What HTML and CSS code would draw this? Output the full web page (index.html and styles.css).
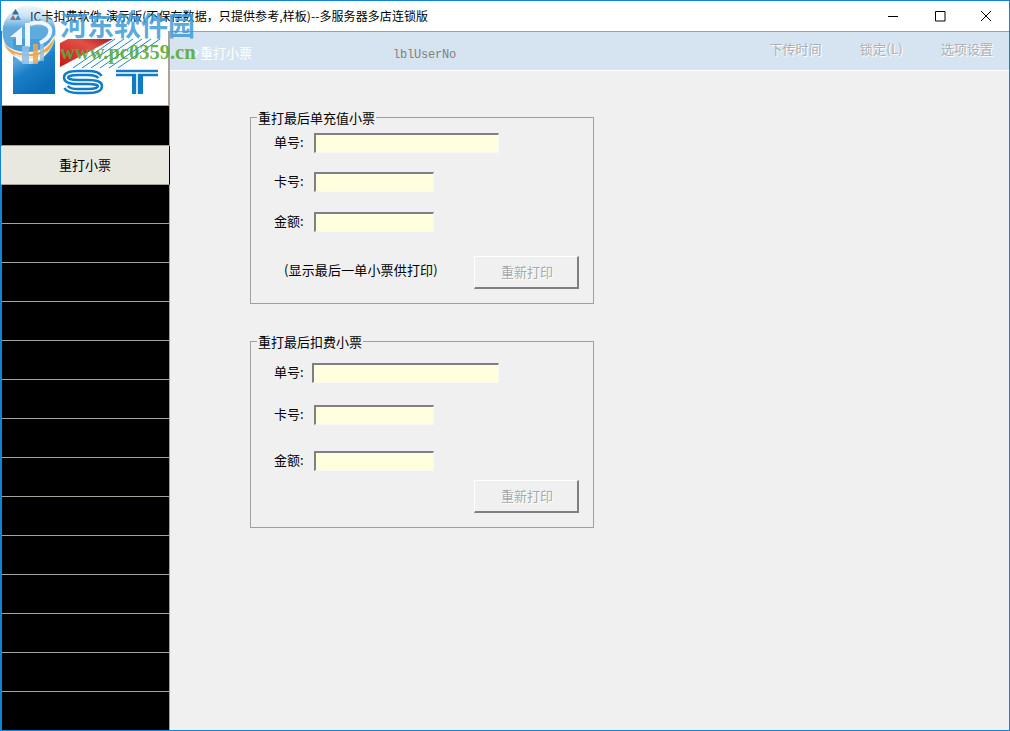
FILE: index.html
```html
<!DOCTYPE html>
<html lang="zh">
<head>
<meta charset="utf-8">
<title>IC卡扣费软件</title>
<link rel="stylesheet" href="styles.css">
</head>
<body>
<div class="window">
  <header class="titlebar">
    <svg class="app-icon" width="16" height="16" viewBox="0 0 16 16"><path d="M5.500 1L9 6.500H2z" fill="#2f5f7f"/><path d="M3 7l3 5H0z" fill="#c84848"/><path d="M8 7l3 5H5z" fill="#2f7f9f"/></svg>
    <span class="title">IC卡扣费软件-演示版(不保存数据，只提供参考,样板)--多服务器多店连锁版</span>
    <div class="controls">
      <span class="ctl"><svg width="12" height="12" viewBox="0 0 12 12"><path d="M0 6.500h10" stroke="#000" fill="none"/></svg></span>
      <span class="ctl"><svg width="12" height="12" viewBox="0 0 12 12"><path d="M1.500 1.500h9.500v9.500h-9.500z" stroke="#000" fill="none"/></svg></span>
      <span class="ctl"><svg width="12" height="12" viewBox="0 0 12 12"><path d="M1 1l10 10M11 1L1 11" stroke="#000" fill="none"/></svg></span>
    </div>
  </header>
  <div class="body">
    <aside class="sidebar">
      <div class="logo">
        <svg width="166" height="74" viewBox="0 0 166 74">
          <defs>
            <linearGradient id="blk" x1="0" y1="0" x2="0.5" y2="1"><stop offset="0" stop-color="#1678c0"/><stop offset="0.35" stop-color="#5aa8dc"/><stop offset="0.6" stop-color="#1a80c8"/><stop offset="1" stop-color="#0a6cb4"/></linearGradient>
            <linearGradient id="red" x1="0" y1="1" x2="1" y2="0"><stop offset="0" stop-color="#d01414"/><stop offset="0.65" stop-color="#e05048"/><stop offset="1" stop-color="#b01818"/></linearGradient>
          </defs>
          <rect x="11" y="8" width="42" height="55" fill="url(#blk)"/>
          <path d="M58 12l8-4h45L58 36z" fill="url(#red)"/>
          <g stroke="#1f86c6" stroke-width="1" fill="none">
            <path d="M71 37L113 8M80 37L122 8M89 37L131 8M98 37L140 8M107 37L149 8M116 37L158 8"/>
          </g>
          <g fill="none" stroke-width="6.500" stroke="#0f7cc4">
            <path d="M98 46C96 43 92 42 86 42H76C68 42 64 44 64 46.500C64 49.500 68 51 76 51H86C94 51 98 52.500 98 55C98 58 94 60 86 60H76C70 60 66 59 64 56"/>
            <path d="M114 42H156"/>
          </g>
          <rect x="130" y="42" width="11" height="21" fill="#0f7cc4"/>
          <g fill="none" stroke-width="1.600" stroke="#fff">
            <path d="M98 46C96 43 92 42 86 42H76C68 42 64 44 64 46.500C64 49.500 68 51 76 51H86C94 51 98 52.500 98 55C98 58 94 60 86 60H76C70 60 66 59 64 56"/>
            <path d="M114 42H156M135 42V63"/>
          </g>
        </svg>
      </div>
      <nav class="menu">
        <div class="item first"></div>
        <div class="item active">重打小票</div>
        <div class="item"></div>
        <div class="item"></div>
        <div class="item"></div>
        <div class="item"></div>
        <div class="item"></div>
        <div class="item"></div>
        <div class="item"></div>
        <div class="item"></div>
        <div class="item"></div>
        <div class="item"></div>
        <div class="item"></div>
        <div class="item"></div>
        <div class="item"></div>
        <div class="item last"></div>
      </nav>
    </aside>
    <main class="main">
      <div class="band">
        <span class="crumb"><span class="caret"></span>重打小票</span>
        <span class="user">lblUserNo</span>
        <div class="links">
          <span class="link">下传时间</span>
          <span class="link link-lock">锁定(L)</span>
          <span class="link">选项设置</span>
        </div>
      </div>
      <div class="content">
        <section class="group">
          <h2 class="legend">重打最后单充值小票</h2>
          <div class="row row-a1"><label class="lab">单号:</label><span class="input wide"></span></div>
          <div class="row row-a2"><label class="lab">卡号:</label><span class="input"></span></div>
          <div class="row row-a3"><label class="lab">金额:</label><span class="input"></span></div>
          <div class="actions action-a">
            <span class="note">(显示最后一单小票供打印)</span>
            <button class="btn" disabled>重新打印</button>
          </div>
        </section>
        <section class="group">
          <h2 class="legend">重打最后扣费小票</h2>
          <div class="row row-b1"><label class="lab lab-tight">单号:</label><span class="input wider"></span></div>
          <div class="row row-b2"><label class="lab">卡号:</label><span class="input"></span></div>
          <div class="row row-b3"><label class="lab">金额:</label><span class="input"></span></div>
          <div class="actions action-b">
            <button class="btn" disabled>重新打印</button>
          </div>
        </section>
      </div>
    </main>
  </div>
  <div class="mark" aria-hidden="true">
    <svg class="mark-logo" width="58" height="62" viewBox="0 0 58 62">
      <defs>
        <linearGradient id="disc" x1="0" y1="0" x2="0" y2="1">
          <stop offset="0" stop-color="#4a9fd9" stop-opacity=".08"/>
          <stop offset="0.2" stop-color="#4a9fd9" stop-opacity=".3"/>
          <stop offset="0.42" stop-color="#4a9fd9" stop-opacity=".88"/>
          <stop offset="1" stop-color="#4a9fd9" stop-opacity=".88"/>
        </linearGradient>
      </defs>
      <circle cx="27" cy="27" r="26.500" fill="url(#disc)"/>
      <path d="M8 32L20 22V40H14V32z" fill="#fff" opacity=".9"/>
      <path d="M23 18h5v24h-5z" fill="#fff" opacity=".9"/>
      <path d="M28 19C40 15 50 20 48 28C47 33 42 36 38 38" fill="none" stroke="#fff" stroke-width="4" opacity=".9"/>
      <path d="M1 38C6 50 16 56 28 56C40 56 50 48 54 30C52 30 50 34 48 37C42 44 34 47 26 47C16 47 8 44 1 38z" fill="#f0f0f0"/>
      <path d="M2 39C8 46 18 49 28 49C38 49 47 43 53 32C50 46 40 54 28 54C16 54 6 48 2 39z" fill="#e9a750"/>
      <path d="M12 48C16 50 22 51 28 51C34 51 40 49 45 46C42 54 36 59 28 59C20 59 15 55 12 48z" fill="#fff" opacity=".7"/>
      <path d="M20 41h7v18h-7z" fill="#8fc0e4" opacity=".9"/>
      <path d="M31 39h5v20h-5z" fill="#e9a750" opacity=".85"/>
      <path d="M38 39h4v17h-4z" fill="#8fc0e4" opacity=".8"/>
    </svg>
    <span class="mark-cn">河东软件园</span>
    <span class="mark-url">www.pc0359.cn</span>
  </div>
</div>
</body>
</html>
```

FILE: styles.css
```css
* { box-sizing: border-box; }
html, body { margin: 0; padding: 0; }
body {
  width: 1010px;
  height: 731px;
  overflow: hidden;
  font-family: "Noto Sans CJK SC", "Liberation Sans", sans-serif;
  font-size: 13px;
  color: #000;
}
.window {
  position: relative;
  width: 1010px;
  height: 731px;
  display: flex;
  flex-direction: column;
  border: 1px solid #0f84d8;
  background: #f0f0f0;
}
.titlebar {
  height: 30px;
  background: #fff;
  display: flex;
  align-items: center;
  flex: none;
  padding-left: 9px;
}
.app-icon { flex: none; margin-top: -1px; }
.title { margin-left: 4px; font-size: 12px; letter-spacing: 0.08px; white-space: nowrap; margin-top: -2px; }
.controls { margin-left: auto; display: flex; }
.ctl {
  width: 46px;
  height: 30px;
  display: flex;
  align-items: center;
  justify-content: center;
}
.body { flex: 1; display: flex; min-height: 0; }
.sidebar {
  width: 169px;
  flex: none;
  display: flex;
  flex-direction: column;
  border-left: 1px solid #0f84d8;
}
.logo {
  height: 75px;
  flex: none;
  background: #fff;
  border-bottom: 1px solid #a8a298;
  border-right: 2px solid #a8a298;
  overflow: hidden;
}
.logo svg { display: block; }
.menu { flex: 1; display: flex; flex-direction: column; }
.item {
  height: 39px;
  flex: none;
  background: #000;
  border-bottom: 1px solid #a8a298;
  border-right: 1px solid #a8a298;
}
.item.first { height: 40px; }
.item.last { flex: 1; border-bottom: 0; }
.item.active {
  background: #e8e8e0;
  border-right: 1px solid #000;
  margin-left: -1px;
  display: flex;
  align-items: center;
  justify-content: center;
  padding-bottom: 2px;
  font-size: 13px;
}
.main { flex: 1; display: flex; flex-direction: column; min-width: 0; }
.band {
  height: 40px;
  flex: none;
  display: flex;
  align-items: center;
  background: #d6e4f1;
  border-top: 1px solid #a0a0a0;
  border-bottom: 1px solid #fff;
  padding: 0 16px 0 25px;
}
.crumb { color: #fff; margin-top: 2px; display: flex; align-items: center; }
.caret {
  width: 5px;
  height: 5px;
  margin-left: -2px;
  margin-right: 2px;
  border-top: 1px solid #fff;
  border-right: 1px solid #fff;
  transform: rotate(45deg);
}
.user {
  margin-left: 141px;
  margin-top: 7px;
  font-family: "Liberation Mono", monospace;
  font-size: 12px;
  letter-spacing: -0.2px;
  color: #808080;
}
.links { margin-left: auto; display: flex; gap: 38px; margin-top: -6px; }
.link { color: #b0b0b0; text-shadow: 1px 1px 0 #fff; white-space: nowrap; }
.link-lock { letter-spacing: 0.3px; }
.content {
  flex: 1;
  padding: 46px 0 0 80px;
  display: flex;
  flex-direction: column;
  gap: 37px;
  align-items: flex-start;
}
.group {
  width: 344px;
  height: 187px;
  flex: none;
  border: 1px solid #a0a0a0;
  padding: 0 14px 0 23px;
  display: flex;
  flex-direction: column;
}
.legend {
  margin: -8px 0 0 -17px;
  padding: 0 1px;
  align-self: flex-start;
  height: 16px;
  line-height: 16px;
  font-size: 13px;
  font-weight: 400;
  background: #f0f0f0;
}
.row { display: flex; align-items: center; height: 20px; flex: none; }
.row-a1 { margin-top: 7px; }
.row-a2 { margin-top: 19px; }
.row-a3 { margin-top: 20px; }
.action-a { margin-top: 24px; }
.row-b1 { margin-top: 13px; }
.row-b2 { margin-top: 22px; }
.row-b3 { margin-top: 26px; }
.action-b { margin-top: 9px; }
.lab { width: 40px; flex: none; white-space: nowrap; margin-top: -4px; }
.lab-tight { width: 38px; }
.input {
  display: block;
  width: 120px;
  height: 20px;
  background: #ffffe0;
  border-top: 2px solid #808080;
  border-left: 2px solid #808080;
  border-right: 1px solid #f8f8f8;
  border-bottom: 1px solid #f8f8f8;
}
.input.wide { width: 185px; }
.input.wider { width: 187px; }
.actions { display: flex; align-items: center; justify-content: flex-end; height: 33px; flex: none; }
.note { margin-right: auto; margin-left: 10px; margin-bottom: 6px; letter-spacing: 0.15px; white-space: nowrap; }
.btn {
  width: 105px;
  height: 33px;
  padding: 0 0 2px 2px;
  font: inherit;
  color: #a8a8a8;
  text-shadow: 1px 1px 0 #fff;
  background: #f0f0f0;
  border-style: solid;
  border-width: 1px 2px 2px 1px;
  border-color: #fff #808080 #808080 #fff;
}
.mark {
  position: absolute;
  left: 0;
  top: 0;
  width: 200px;
  height: 70px;
  pointer-events: none;
}
.mark-logo { position: absolute; left: 1px; top: 4px; }
.mark-cn {
  position: absolute;
  left: 59px;
  top: 8px;
  font-family: "Noto Sans CJK SC", sans-serif;
  font-size: 27px;
  line-height: 32px;
  font-weight: 700;
  color: #3f9bd8;
  opacity: .85;
  white-space: nowrap;
}
.mark-url {
  position: absolute;
  left: 59px;
  top: 40px;
  font-family: "Liberation Serif", serif;
  font-size: 20.500px;
  line-height: 22px;
  font-weight: 700;
  color: #5aaa3c;
  opacity: .9;
  white-space: nowrap;
}
```
